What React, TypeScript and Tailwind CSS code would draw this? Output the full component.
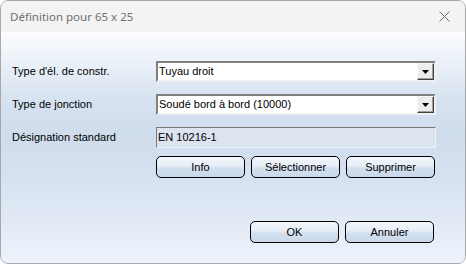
function Combo({ value }: { value: string }) {
  return (
    <div className="flex h-[21px] w-[280px] items-stretch border-2 border-t-[#7f7f7f] border-l-[#7f7f7f] border-b-[#eef0f3] border-r-[#eef0f3] bg-white">
      <div className="flex flex-1 items-center pl-[1px] text-[11px] text-black">{value}</div>
      <div className="flex w-[17px] items-center justify-center border border-t-[#f8f8f8] border-l-[#f8f8f8] border-b-[#404040] border-r-[#404040] bg-[#ececec] shadow-[inset_-1px_-1px_0_#a0a0a0]">
        <svg width="7" height="4" viewBox="0 0 7 4">
          <path d="M0 0h7L3.5 4z" fill="#000" />
        </svg>
      </div>
    </div>
  );
}

function Btn({ label }: { label: string }) {
  return (
    <button className="flex h-[22px] w-[89px] items-center justify-center rounded-[5px] border border-black bg-[linear-gradient(to_bottom,#f4f7fb_0%,#e6edf6_45%,#d3e0ef_55%,#c9d8ea_100%)] text-[11px] text-black">
      {label}
    </button>
  );
}

export default function App() {
  return (
    <div className="flex h-[264px] w-[466px] flex-col overflow-hidden rounded-[8px] border border-[#a8a8a8] font-['Liberation_Sans',sans-serif]">
      <div className="flex h-[31px] shrink-0 items-center justify-between bg-[#f3f3f3] pl-[9px] pr-[10px]">
        <span className="font-['Noto_Sans',sans-serif] text-[11.5px] text-[#707070]">Définition pour 65 x 25</span>
        <svg width="11" height="11" viewBox="0 0 11 11" className="mr-[5px]">
          <path d="M0.5 0.5l10 10M10.5 0.5l-10 10" stroke="#707070" strokeWidth="1" />
        </svg>
      </div>
      <div className="flex flex-1 flex-col bg-[linear-gradient(to_bottom,#fbfcfe_0%,#d6e2f0_30%,#cfdcec_45%,#dae4f2_70%,#eef3fb_100%)] pl-[11px] text-[11px] text-black">
        <div className="mt-[29px] flex items-center">
          <span className="w-[144px]">Type d'él. de constr.</span>
          <Combo value="Tuyau droit" />
        </div>
        <div className="mt-[12px] flex items-center">
          <span className="w-[144px]">Type de jonction</span>
          <Combo value="Soudé bord à bord (10000)" />
        </div>
        <div className="mt-[12px] flex items-center">
          <span className="w-[144px]">Désignation standard</span>
          <div className="flex h-[21px] w-[280px] items-center border border-t-[#7a7a7a] border-l-[#7a7a7a] border-b-[#eef2f7] border-r-[#eef2f7] bg-[#dbe4ef] pl-[1px]">
            EN 10216-1
          </div>
        </div>
        <div className="mt-[8px] flex gap-[6px] pl-[144px]">
          <Btn label="Info" />
          <Btn label="Sélectionner" />
          <Btn label="Supprimer" />
        </div>
        <div className="mt-[43px] flex gap-[6px] pl-[238px]">
          <Btn label="OK" />
          <Btn label="Annuler" />
        </div>
      </div>
    </div>
  );
}
